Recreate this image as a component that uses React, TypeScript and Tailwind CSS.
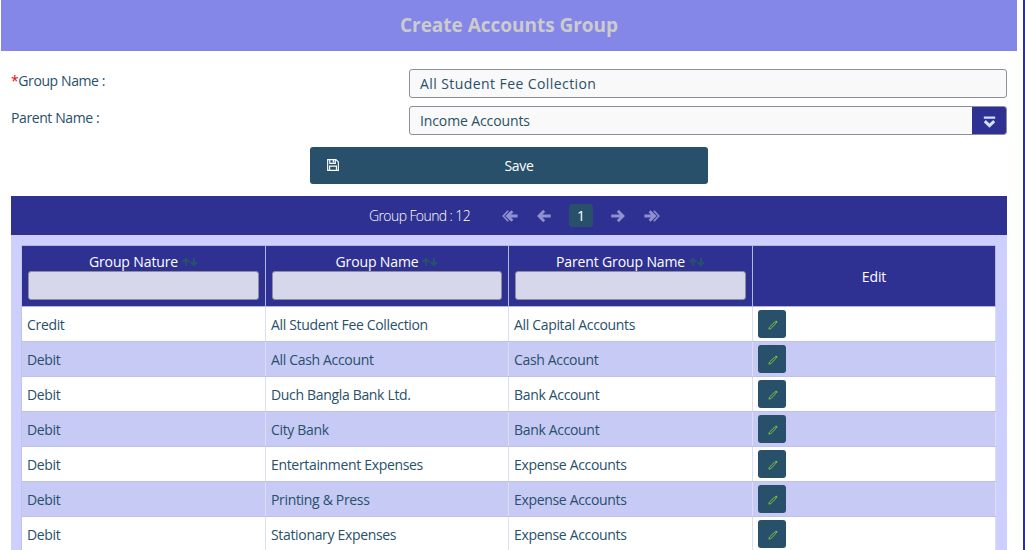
import React from "react";

const rows: [string, string, string][] = [
  ["Credit", "All Student Fee Collection", "All Capital Accounts"],
  ["Debit", "All Cash Account", "Cash Account"],
  ["Debit", "Duch Bangla Bank Ltd.", "Bank Account"],
  ["Debit", "City Bank", "Bank Account"],
  ["Debit", "Entertainment Expenses", "Expense Accounts"],
  ["Debit", "Printing & Press", "Expense Accounts"],
  ["Debit", "Stationary Expenses", "Expense Accounts"],
];

const columns = ["Group Nature", "Group Name", "Parent Group Name"];

function ArrowLeft({ double = false }: { double?: boolean }) {
  return (
    <svg width="16" height="14" viewBox="0 0 16 14" fill="none" stroke="#8e90d0">
      {double ? (
        <>
          <path d="M6.2 1.8 1.2 7l5 5.2" strokeWidth="1.6" />
          <path d="M10.4 2.2 5.4 7l5 4.8M6 7h9.6" strokeWidth="2.8" />
        </>
      ) : (
        <path d="M8.2 1.8 3 7l5.2 5.2M3.4 7h11.4" strokeWidth="2.8" />
      )}
    </svg>
  );
}

function SortIcon() {
  return (
    <svg width="16" height="10" viewBox="0 0 16 10" fill="none" stroke="#28506a" strokeWidth="2">
      <path d="M4 9V2M.8 5 4 1.8 7.2 5M12 1v7M8.8 5 12 8.2 15.2 5" />
    </svg>
  );
}

function Pencil() {
  return (
    <svg className="mt-px ml-px" width="10" height="10" viewBox="0 0 10 10" fill="none" stroke="#7cc142">
      <path d="M.9 9.1 1.4 7.2 6.3 2.4 7.7 3.8 2.8 8.6Z" strokeWidth="1" />
      <path d="M7.5 1.1 9 2.6" strokeWidth="1.9" />
    </svg>
  );
}

export default function App() {
  return (
    <div className="flex h-[550px] w-[1025px] overflow-hidden bg-white font-['Open_Sans',sans-serif] text-[14px] leading-5 text-[#28506a]">
      <main className="flex w-[1023px] shrink-0 flex-col pl-px">
        <header className="flex h-[51px] w-[1016px] shrink-0 items-center justify-center bg-[#8587e8] pb-[2px] text-[19px] font-bold text-[#cccccc]">
          <h1 className="tracking-[-0.02px]">Create Accounts Group</h1>
        </header>

        <form className="flex w-[1006px] shrink-0 flex-col pt-[18px] pl-[10px]">
          <div className="flex h-[37px]">
            <label className="w-[398px] pt-[2px] tracking-[-0.4px]">
              <span className="text-red-600">*</span>Group Name :
            </label>
            <div className="flex h-[29px] flex-1 items-center rounded-[3px] border border-[#8c8e99] bg-[#f9f9f9] px-[10px] font-medium tracking-[0.42px]">
              All Student Fee Collection
            </div>
          </div>
          <div className="flex h-[41px]">
            <label className="w-[398px] pt-[2px] tracking-[-0.4px]">Parent Name :</label>
            <div className="flex h-[29px] flex-1 items-center overflow-hidden rounded-[3px] border border-[#8c8e99] bg-[#f9f9f9] pl-[10px] font-medium">
              <span className="flex-1 tracking-[-0.12px]">Income Accounts</span>
              <span className="flex h-full w-[34px] items-center justify-center bg-[#2e3192]">
                <svg className="mt-[3px]" width="13" height="12" viewBox="0 0 13 12" fill="none" stroke="#cfe0f8">
                  <path d="M.8 1.7h11.4" strokeWidth="2.2" />
                  <path d="M1.8 5.2 6.5 9.6l4.7-4.4" strokeWidth="3" />
                </svg>
              </span>
            </div>
          </div>
          <div className="ml-[299px] flex h-[37px] w-[398px] items-center self-start rounded-[3px] bg-[#28506a] text-white">
            <svg className="-mt-px ml-[17px]" width="12" height="12" viewBox="0 0 13 13" fill="none" stroke="white" strokeWidth="1.2">
              <path d="M.7.7h9l2.6 2.6v9H.7ZM3 .7v4h6v-4M2.8 12.3V7.7h7.4v4.6" />
              <path d="M7 1.2v2.6" strokeWidth="1.6" />
            </svg>
            <span className="flex-1 pr-[9px] text-center tracking-[-0.3px]">Save</span>
          </div>
        </form>

        <section className="mt-[12px] ml-[10px] flex w-[996px] flex-1 flex-col bg-[#cdd0ff]">
          <div className="flex h-[39px] shrink-0 items-center bg-[#2e3192] pl-[358px] text-white">
            <span className="w-[133px] font-light tracking-[-0.6px]">Group Found : 12</span>
            <ArrowLeft double />
            <span className="ml-[18px] flex"><ArrowLeft /></span>
            <span className="ml-[17px] flex h-[23px] w-[24px] items-center justify-center rounded-[3px] bg-[#28506a]">1</span>
            <span className="ml-[17px] flex rotate-180"><ArrowLeft /></span>
            <span className="ml-[18px] flex rotate-180"><ArrowLeft double /></span>
          </div>

          <div className="mt-[10px] ml-[10px] w-[975px] border-l border-[#c0c4e8]">
            <div className="grid h-[62px] grid-cols-[244px_243px_244px_243px] border-y border-[#b4b7dd] bg-[#2e3192] font-medium tracking-[-0.13px] text-white">
              {columns.map((name) => (
                <div key={name} className="flex flex-col border-r border-[#b4b7dd] px-[6px] pt-[6px]">
                  <div className="flex h-[19px] items-center justify-center gap-[4px]">
                    <span>{name}</span>
                    <SortIcon />
                  </div>
                  <div className="h-[29px] rounded-[3px] border border-[#8c8e99] bg-[#d6d7ea]" />
                </div>
              ))}
              <div className="flex items-center justify-center border-r border-[#b4b7dd] pt-[2px]">Edit</div>
            </div>
            {rows.map(([nature, name, parent], i) => (
              <div
                key={i}
                className="grid h-[35px] grid-cols-[244px_243px_244px_243px] border-b border-[#bfc2e6] bg-white tracking-[-0.33px] odd:bg-[#c6caf5]"
              >
                {[nature, name, parent].map((text, c) => (
                  <div key={c} className="flex items-center border-r border-[#dcdef2] pt-[2px] pl-[5px]">
                    {text}
                  </div>
                ))}
                <div className="flex items-center border-r border-[#dcdef2] pl-[5px]">
                  <button className="flex size-7 items-center justify-center rounded-[3px] bg-[#28506a]">
                    <Pencil />
                  </button>
                </div>
              </div>
            ))}
          </div>
        </section>
      </main>
      <div className="w-[2px] shrink-0 bg-[#2e3192]" />
    </div>
  );
}
